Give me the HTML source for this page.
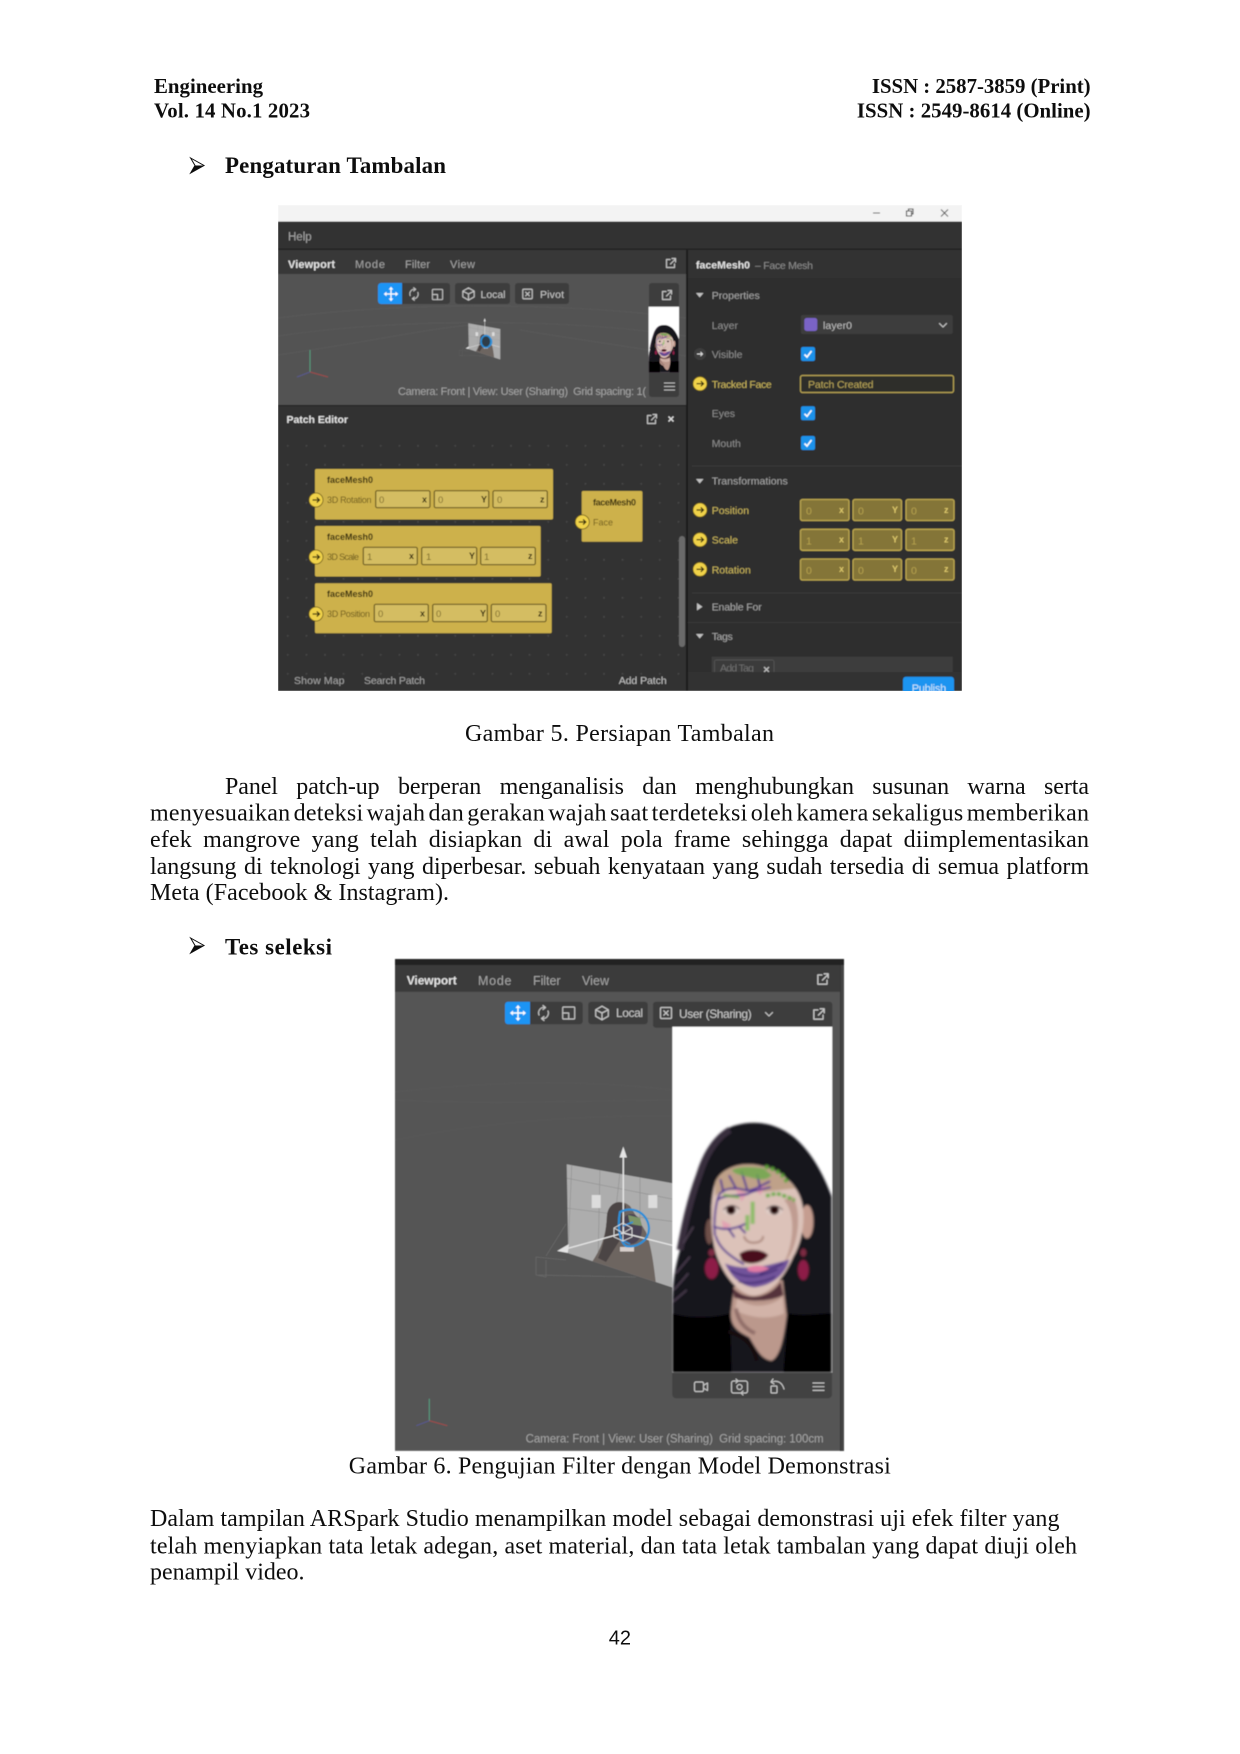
<!DOCTYPE html>
<html lang="id"><head><meta charset="utf-8"><title>Engineering Vol. 14 No.1 2023</title>
<style>
html,body{margin:0;padding:0;background:#fff;width:1240px;height:1754px;overflow:hidden}
svg{display:block}
.t{font-family:"Liberation Serif",serif;fill:#111}
.b{font-weight:700}
.r{font-size:24px}
.h{font-size:20.83px}
.u{font-family:"Liberation Sans",sans-serif;font-size:10.5px;fill:#a4a4a4}
.w{font-weight:700;fill:#e4e4e4}
.y{fill:#c9b55c}
.n{font-family:"Liberation Sans",sans-serif;font-size:9px;fill:#6e5c1e}
.nb{font-weight:700;fill:#33290a}
.i{fill:none;stroke:#c4c4c4;stroke-width:1.2;stroke-linecap:round;stroke-linejoin:round}
</style></head><body>
<svg xmlns="http://www.w3.org/2000/svg" width="1240" height="1754" viewBox="0 0 1240 1754">
<defs>
<filter id="soft" x="-2%" y="-2%" width="104%" height="104%"><feGaussianBlur stdDeviation=".45"/></filter>
<filter id="txt" x="0" y="0" width="100%" height="100%"><feGaussianBlur stdDeviation=".3"/></filter>
<filter id="fb" x="-5%" y="-5%" width="110%" height="110%"><feGaussianBlur stdDeviation="3.200"/></filter>
<pattern id="dots" width="18.6" height="19" patternUnits="userSpaceOnUse"><rect x="8" y="8" width="1.6" height="1.6" fill="#484848"/></pattern>
<clipPath id="c1"><rect x="278" y="205" width="684" height="486"/></clipPath>
<clipPath id="cf"><rect x="672.3" y="1026.7" width="160" height="346"/></clipPath>
<clipPath id="cp"><polygon points="566.7,1164.3 677,1184 677,1289 568.3,1253.3"/></clipPath>
<g id="pop"><path class="i" d="M-1-3.500H-4.500V4.500H3.500V1M-.5 1L4.500-4M1-4.500H4.500V-1"/></g>
<g id="xb"><rect class="i" x="-5" y="-5" width="10" height="10" rx="1"/><path class="i" d="M-2-2L2 2M2-2L-2 2"/></g>
<g id="cube"><path class="i" d="M0-6.500L6-3V3L0 6.500L-6 3V-3ZM-6-3L0 0L6-3M0 0V6.500"/></g>
<g id="mv"><path d="M0-7V7M-7 0H7" stroke="#fff" stroke-width="1.400" fill="none"/><path d="M0-8L-2.500-5H2.500ZM0 8L-2.500 5H2.500ZM-8 0L-5-2.500V2.500ZM8 0L5-2.500V2.500Z" fill="#fff"/></g>
<g id="rot"><path class="i" d="M-4.500 2C-6-2-3-6 1-5.500M4.500-2C6 2 3 6-1 5.500M-.5-7.500L2-5.500L-.5-3.500M.5 7.500L-2 5.500L.5 3.500"/></g>
<g id="sc"><rect class="i" x="-6" y="-6" width="12" height="12" rx="1"/><path class="i" d="M-6 0H0V6"/></g>
<g id="arr"><circle r="7" fill="#f0d24a" stroke="#6b5a1a" stroke-width=".8"/><path d="M-3.500 0H3M.8-2.500L3.500 0L.8 2.500" fill="none" stroke="#332a08" stroke-width="1.200"/></g>
<g id="chk"><rect x="-7" y="-7" width="14" height="14" rx="2" fill="#1b92ea"/><path d="M-3.500.5L-1 3L3.500-3" fill="none" stroke="#fff" stroke-width="1.600"/></g>
<g id="gz">
<polygon points="566.7,1164.3 677,1184 677,1289 568.3,1253.3" fill="#adadad"/>
<g clip-path="url(#cp)">
<path d="M566 1178L677 1200M566 1208L677 1222M572 1160L568 1254M600 1168L598 1262M640 1176L640 1275M620 1172L610 1262" stroke="#929292" stroke-width=".7" fill="none"/>
<path d="M592 1262C600 1250 606 1238 607 1215C609 1201 622 1199 630 1206L646 1232C652 1248 654 1268 656 1284L620 1276Z" fill="#6d6561"/>
<path d="M607 1215C609 1201 622 1199 626 1206L620 1240L606 1262L598 1258C604 1245 606 1232 607 1215Z" fill="#4c4544"/>
<ellipse cx="631" cy="1229" rx="11" ry="15" fill="#4a4352"/>
<path d="M628 1215L640 1218L642 1226L630 1224Z" fill="#7c9468"/>
<rect x="620" y="1247" width="14" height="4.500" fill="#d8cfcb"/>
</g>
<path d="M546 1256L566 1224M536 1257L566 1260M536 1257L536 1275L636 1277M536 1275L546 1277L546 1260" stroke="#696969" stroke-width=".8" fill="none"/>
<rect x="591.700" y="1195" width="9" height="13" fill="#dcdcdc"/><rect x="648.300" y="1195" width="9" height="13" fill="#dcdcdc"/>
<path d="M623.300 1152V1233M623.300 1233L562 1250M623.300 1233L675 1246" stroke="#e6e6e6" stroke-width="1.400" fill="none"/>
<path d="M623.300 1146.500L619.500 1157.500H627Z" fill="#e4e4e4"/>
<path d="M557 1251L569 1244L568 1253Z" fill="#e4e4e4"/>
<path d="M620 1212C634 1205 648 1214 649 1228C649 1242 635 1248 626 1246C618 1240 618 1222 620 1212Z" fill="none" stroke="#2a8fd8" stroke-width="2.200"/>
<path d="M623 1226L633 1222M622 1240L630 1244" stroke="#2a8fd8" stroke-width="1.500"/>
<path d="M614 1228L623 1223L632 1228V1237L623 1241L614 1237ZM614 1228L623 1233L632 1228M623 1233V1241" fill="none" stroke="#ddd" stroke-width=".9"/>
</g>
<g id="ax"><path d="M0 0V-22" stroke="#55a283" stroke-width="1"/><path d="M0 0L18 5" stroke="#a84a4a" stroke-width="1"/><path d="M0 0L-13 5" stroke="#5a5a94" stroke-width="1"/></g>
<g id="face">
<rect x="672.3" y="1026.7" width="160" height="346" fill="#fff"/>
<g clip-path="url(#cf)"><g transform="translate(660 1100) scale(.33333)"><g filter="url(#fb)">
<path d="M37 620C38 560 40 520 60 450C70 380 85 300 110 220C130 150 170 90 230 75C290 60 350 70 400 110C450 150 490 220 515 290V818H37Z" fill="#19131b"/>
<path d="M60 450C75 370 90 300 118 225C135 170 165 115 210 90" fill="none" stroke="#382d3c" stroke-width="20"/>
<path d="M48 520L90 470M42 570L85 520M40 605L80 570M70 430L100 380" stroke="#54465a" stroke-width="4"/>
<path d="M37 640C100 660 180 650 210 640L215 818H37ZM385 640C430 650 480 640 515 640V818H370Z" fill="#040304"/>
<path d="M222 560L214 625C208 670 222 690 268 712C292 752 305 778 335 782C360 770 372 715 380 645L368 540Z" fill="#bb988c"/>
<path d="M232 595C270 625 330 625 368 590L372 640C330 660 270 655 225 630Z" fill="#d2b3a8"/>
<path d="M205 695C240 705 278 725 290 782" fill="none" stroke="#120c11" stroke-width="11"/>
<path d="M228 625C235 670 262 690 285 700" fill="none" stroke="#7f5c5a" stroke-width="12" opacity=".7"/>
<ellipse cx="441" cy="365" rx="19" ry="50" fill="#c59d90"/>
<ellipse cx="148" cy="395" rx="12" ry="38" fill="#6e5048"/>
<path d="M165 250C175 215 225 185 290 195C350 205 400 240 420 290C440 340 430 420 400 470C375 530 330 585 280 587C230 582 180 510 165 450C150 390 150 300 165 250Z" fill="#dcc2b9"/>
<path d="M165 250C175 215 225 185 290 195C340 205 385 235 405 265C350 270 300 280 250 275C215 270 185 265 165 290Z" fill="#bfa189"/>
<path d="M218 562C250 602 325 602 362 545L370 585C335 606 262 606 222 592Z" fill="#55303a"/>
<path d="M372 300C410 340 400 440 370 490C410 460 430 350 400 290Z" fill="#b48c80" opacity=".7"/>
<path d="M225 265L262 280L245 305ZM280 262L320 258L300 285ZM185 360L215 375L190 390Z" fill="#e39ab0" opacity=".8"/>
<path d="M165 405C160 360 168 300 180 280C200 262 230 262 262 272C285 270 305 255 328 245M172 300C195 282 230 290 262 282C282 270 300 270 330 262M162 380C195 392 225 388 255 372M228 265L208 228M262 270L245 216M300 262L292 225M190 275L182 240M205 386L222 410M238 380L255 398M168 410C178 445 210 468 250 492" fill="none" stroke="#4e3191" stroke-width="6" stroke-linecap="round"/>
<path d="M195 490C250 512 310 502 388 478C378 520 340 556 285 562C245 560 212 530 195 490Z" fill="#71529a"/>
<path d="M262 503C285 492 312 497 328 506C310 516 282 520 264 512Z" fill="#e27aa4"/>
<path d="M212 512C245 530 285 540 352 508M236 545C260 552 300 552 345 530M300 522L370 490" fill="none" stroke="#37236c" stroke-width="4"/>
<path d="M215 210C240 198 280 200 310 205L335 225C320 245 290 238 270 232C245 225 228 226 215 210Z" fill="#6fa84f" opacity=".85"/>
<path d="M315 200L345 210L365 225L385 250" fill="none" stroke="#5ea439" stroke-width="12" stroke-dasharray="11 7"/>
<path d="M318 288L350 280L385 292L405 302" fill="none" stroke="#6cad47" stroke-width="11" stroke-dasharray="12 5"/>
<path d="M278 305V372M262 345V392" fill="none" stroke="#7dbb57" stroke-width="12" opacity=".85"/>
<path d="M190 285L238 292" stroke="#6cad47" stroke-width="9" opacity=".7"/>
<ellipse cx="213" cy="330" rx="26" ry="16" fill="#e0cec8"/><circle cx="213" cy="330" r="14" fill="#3a1b1c"/><circle cx="213" cy="330" r="6" fill="#0b0506"/>
<ellipse cx="343" cy="330" rx="26" ry="16" fill="#e0cec8"/><circle cx="343" cy="330" r="14" fill="#3a1b1c"/><circle cx="343" cy="330" r="6" fill="#0b0506"/>
<path d="M190 330C202 314 226 312 238 328M320 328C332 314 354 314 368 330" fill="none" stroke="#3c2427" stroke-width="3"/>
<path d="M252 408C255 422 268 430 285 428C298 428 310 420 309 408" fill="none" stroke="#a98478" stroke-width="6"/>
<path d="M238 462C255 446 300 443 325 465C310 492 265 497 245 482Z" fill="#4a0d1c"/>
<ellipse cx="155" cy="505" rx="20" ry="32" fill="#8d1d46"/><ellipse cx="155" cy="458" rx="10" ry="11" fill="#7d2a42"/>
<ellipse cx="430" cy="510" rx="16" ry="30" fill="#8d1d46"/><ellipse cx="430" cy="458" rx="9" ry="12" fill="#7d2a42"/>
</g></g></g></g>
</defs>

<!-- PAGE TEXT -->
<g filter="url(#txt)">
<text class="t b h" x="154" y="93" textLength="109">Engineering</text>
<text class="t b h" x="154" y="117.500" textLength="156">Vol. 14 No.1 2023</text>
<text class="t b h" x="871.900" y="93" textLength="218.700">ISSN : 2587-3859 (Print)</text>
<text class="t b h" x="856.900" y="117.500" textLength="233.700">ISSN : 2549-8614 (Online)</text>
<text class="t b" font-size="22.900" x="225" y="173" textLength="221">Pengaturan Tambalan</text>
<text class="t r" x="465" y="741" textLength="309">Gambar 5. Persiapan Tambalan</text>
<text class="t r" x="225" y="794" style="word-spacing:12.500px" textLength="864">Panel patch-up berperan menganalisis dan menghubungkan susunan warna serta</text>
<text class="t r" x="150" y="820.700" style="word-spacing:-3px" textLength="939">menyesuaikan deteksi wajah dan gerakan wajah saat terdeteksi oleh kamera sekaligus memberikan</text>
<text class="t r" x="150" y="847" style="word-spacing:5px" textLength="939">efek mangrove yang telah disiapkan di awal pola frame sehingga dapat diimplementasikan</text>
<text class="t r" x="150" y="874.200" style="word-spacing:1.500px" textLength="939">langsung di teknologi yang diperbesar. sebuah kenyataan yang sudah tersedia di semua platform</text>
<text class="t r" x="150" y="900" textLength="299">Meta (Facebook &amp; Instagram).</text>
<text class="t b" font-size="22.900" x="225" y="954.300" textLength="107">Tes seleksi</text>
<text class="t r" x="348.800" y="1473.500" textLength="542">Gambar 6. Pengujian Filter dengan Model Demonstrasi</text>
<text class="t r" x="150" y="1526" textLength="909.500">Dalam tampilan ARSpark Studio menampilkan model sebagai demonstrasi uji efek filter yang</text>
<text class="t r" x="150" y="1553.300" textLength="927">telah menyiapkan tata letak adegan, aset material, dan tata letak tambalan yang dapat diuji oleh</text>
<text class="t r" x="150" y="1579.500" textLength="154.500">penampil video.</text>
<text font-family="Liberation Sans, sans-serif" font-size="20px" fill="#111" x="608.700" y="1644.300" textLength="22.300">42</text>
<path d="M190.600 158L204 165.500L190.600 173L195 165.500Z" fill="#fff" stroke="#111" stroke-width="1"/><path d="M195 165.500H204L190.600 173Z" fill="#111"/>
<path d="M190.600 938L204 945.500L190.600 953L195 945.500Z" fill="#fff" stroke="#111" stroke-width="1"/><path d="M195 945.500H204L190.600 953Z" fill="#111"/>
</g>

<!-- FIGURE 5 -->
<g clip-path="url(#c1)"><g filter="url(#soft)">
<rect x="278" y="205" width="684" height="486" fill="#2f2f2f"/>
<rect x="278" y="205" width="684" height="16.500" fill="#f3f3f3"/>
<path d="M873 213H880M941 209.500L948 216.500M948 209.500L941 216.500" stroke="#555" stroke-width="1" fill="none"/>
<path d="M906.500 211H911.500V216H906.500ZM908.500 211V209H913V214H911.500" stroke="#444" stroke-width="1.100" fill="none"/>
<rect x="278" y="221.500" width="684" height="27" fill="#333"/>
<rect x="278" y="248.500" width="684" height="1.500" fill="#232323"/>
<text class="u" x="288" y="240.500" style="font-size:11.500px">Help</text>
<rect x="278" y="250" width="408" height="24" fill="#373737"/>
<text class="u w" x="288" y="268" textLength="47" style="font-size:11px">Viewport</text>
<text class="u" x="355" y="268" textLength="30" style="font-size:11px">Mode</text>
<text class="u" x="405" y="268" textLength="25" style="font-size:11px">Filter</text>
<text class="u" x="450" y="268" textLength="25" style="font-size:11px">View</text>
<use href="#pop" x="671" y="263"/>
<rect x="278" y="274" width="408" height="131" fill="#535353"/>
<path d="M278 318C400 302 560 302 686 318M278 336C400 318 560 318 686 336M278 355C380 340 420 330 470 325M520 330C580 340 620 345 686 356" stroke="#5b5b5b" stroke-width=".7" fill="none"/>
<rect x="378" y="283" width="72" height="21" rx="3" fill="#3c3c3c"/>
<path d="M381 283H402V304H381A3 3 0 0 1 378 301V286A3 3 0 0 1 381 283Z" fill="#1a94f4"/>
<use href="#mv" transform="translate(391 294) scale(.9)"/>
<use href="#rot" transform="translate(414 294) scale(.85)"/>
<use href="#sc" transform="translate(437.500 294.500) scale(.85)"/>
<rect x="455" y="283" width="55" height="21" rx="3" fill="#3c3c3c"/>
<use href="#cube" transform="translate(468.500 294) scale(.95)"/>
<text class="u" x="480.500" y="298" textLength="25" style="fill:#c8c8c8">Local</text>
<rect x="515" y="283" width="54" height="21" rx="3" fill="#3c3c3c"/>
<use href="#xb" transform="translate(527.500 294) scale(.95)"/>
<text class="u" x="540" y="298" textLength="24" style="fill:#c8c8c8">Pivot</text>
<rect x="649" y="283" width="30" height="114" rx="3" fill="#3c3c3c"/>
<use href="#pop" x="667" y="295"/>
<use href="#face" transform="translate(648.600 306.700) scale(.19) translate(-672.300 -1026.700)"/>
<path d="M664 383H675M664 386.500H675M664 390H675" stroke="#bbb" stroke-width="1"/>
<use href="#gz" transform="translate(468.300 323.300) scale(.29) translate(-566.700 -1164.300)"/>
<ellipse cx="486" cy="341.500" rx="5" ry="6" fill="#2d3c4a" stroke="#2a8fd8" stroke-width="1.600"/>
<use href="#ax" x="310" y="372" opacity=".9"/>
<text class="u" x="398" y="395" textLength="248" style="font-size:11px">Camera: Front | View: User (Sharing)&#160;&#160;Grid spacing: 1(</text>
<rect x="278" y="405" width="409" height="1.500" fill="#1f1f1f"/>
<rect x="278" y="406" width="408" height="285" fill="#313131"/>
<rect x="278" y="440" width="408" height="251" fill="url(#dots)"/>
<text class="u w" x="286.500" y="423" textLength="61.500">Patch Editor</text>
<use href="#pop" x="652" y="419"/>
<path d="M668.500 416.500L673.500 421.500M673.500 416.500L668.500 421.500" stroke="#ddd" stroke-width="1.400"/>
<!-- nodes -->
<g>
<rect x="315" y="469" width="238" height="50.500" rx="1.500" fill="#cdb14b"/>
<rect x="315" y="526" width="225.700" height="50.500" rx="1.500" fill="#cdb14b"/>
<rect x="315" y="583.300" width="236.700" height="50" rx="1.500" fill="#cdb14b"/>
<rect x="581.700" y="491" width="60.700" height="50.700" rx="1.500" fill="#cdb14b"/>
<text class="n nb" x="327" y="483">faceMesh0</text><text class="n nb" x="327" y="540">faceMesh0</text><text class="n nb" x="327" y="597">faceMesh0</text><text class="n nb" x="593" y="505.500" textLength="43">faceMesh0</text>
<text class="n" x="327" y="503" textLength="44.500">3D Rotation</text><text class="n" x="327" y="560" textLength="32">3D Scale</text><text class="n" x="327" y="617" textLength="43">3D Position</text><text class="n" x="593" y="525.500">Face</text>
<g fill="#d4bd62" stroke="#6b5a20" stroke-width="1.200">
<rect x="375.700" y="490.700" width="54.300" height="17" rx="1.500"/><rect x="434.300" y="490.700" width="54.500" height="17" rx="1.500"/><rect x="493" y="490.700" width="54.300" height="17" rx="1.500"/>
<rect x="363.300" y="547.300" width="54" height="17.400" rx="1.500"/><rect x="421.700" y="547.300" width="55" height="17.400" rx="1.500"/><rect x="480.700" y="547.300" width="54.600" height="17.400" rx="1.500"/>
<rect x="374.300" y="604.300" width="54" height="17.400" rx="1.500"/><rect x="432.700" y="604.300" width="54.600" height="17.400" rx="1.500"/><rect x="491.300" y="604.300" width="54.700" height="17.400" rx="1.500"/>
</g>
<g font-family="Liberation Sans, sans-serif" font-size="9.500" fill="#7b6a2c">
<text x="379" y="503">0</text><text x="438" y="503">0</text><text x="497" y="503">0</text>
<text x="367" y="560">1</text><text x="426" y="560">1</text><text x="484" y="560">1</text>
<text x="378" y="617">0</text><text x="436" y="617">0</text><text x="495" y="617">0</text>
</g>
<g font-family="Liberation Sans, sans-serif" font-size="9" font-weight="700" fill="#33290a">
<text x="422" y="502.500">x</text><text x="481" y="502.500">Y</text><text x="540" y="502.500">z</text>
<text x="409" y="559">x</text><text x="469" y="559">Y</text><text x="528" y="559">z</text>
<text x="420" y="616.500">x</text><text x="480" y="616.500">Y</text><text x="538" y="616.500">z</text>
</g>
<use href="#arr" x="316" y="500"/><use href="#arr" x="316" y="557"/><use href="#arr" x="316" y="614"/><use href="#arr" x="582.300" y="522"/>
</g>
<rect x="679" y="536" width="6" height="111" rx="3" fill="#6a6a6a"/>
<text class="u" x="294" y="684" textLength="50.500">Show Map</text>
<text class="u" x="364" y="684" textLength="61">Search Patch</text>
<text class="u" x="618.700" y="684" textLength="48" style="fill:#c0c0c0">Add Patch</text>
<!-- right panel -->
<rect x="686" y="250" width="2" height="441" fill="#1d1d1d"/>
<rect x="688" y="250" width="274" height="441" fill="#2f2f2f"/>
<rect x="688" y="250" width="274" height="28" fill="#323232"/>
<text class="u w" x="696" y="268.500" textLength="54">faceMesh0</text>
<text class="u" x="755" y="269" textLength="58" style="fill:#8c8c8c">– Face Mesh</text>
<path d="M696 293L703.500 293L699.700 297.500Z" fill="#c0c0c0"/>
<text class="u" x="711.700" y="299" textLength="48">Properties</text>
<text class="u" x="711.700" y="329" style="fill:#8c8c8c">Layer</text>
<rect x="801" y="315" width="151.700" height="19" rx="2" fill="#3e3e3e"/>
<rect x="804.300" y="318" width="13" height="13" rx="2.500" fill="#7a63c6"/>
<text class="u" x="823" y="329" textLength="29" style="fill:#bcbcbc">layer0</text>
<path d="M939.500 323.500L943 327L946.500 323.500" class="i"/>
<circle cx="700" cy="354" r="6" fill="#3c3c3c"/><path d="M697 354H702.500M700.500 352L702.500 354L700.500 356" stroke="#ddd" stroke-width="1" fill="none"/>
<text class="u" x="711.700" y="358" style="fill:#8c8c8c">Visible</text>
<use href="#chk" x="808" y="354"/>
<use href="#arr" x="700" y="383.700"/>
<text class="u y" x="711.700" y="388" textLength="60">Tracked Face</text>
<rect x="800.500" y="375.500" width="153" height="17" rx="2" fill="#2e2d2a" stroke="#b9a552" stroke-width="1.200"/>
<text class="u" x="808" y="388" textLength="65.500" style="fill:#b7a458">Patch Created</text>
<text class="u" x="711.700" y="417" style="fill:#8c8c8c">Eyes</text><use href="#chk" x="808" y="413.300"/>
<text class="u" x="711.700" y="447" style="fill:#8c8c8c">Mouth</text><use href="#chk" x="808" y="443"/>
<rect x="692" y="465.500" width="270" height="1" fill="#3b3b3b"/>
<path d="M696 479L703.500 479L699.700 483.500Z" fill="#c0c0c0"/>
<text class="u" x="711.700" y="484.500" textLength="76">Transformations</text>
<use href="#arr" x="700" y="510"/><use href="#arr" x="700" y="539.700"/><use href="#arr" x="700" y="569.300"/>
<text class="u y" x="711.700" y="514">Position</text><text class="u y" x="711.700" y="543.700">Scale</text><text class="u y" x="711.700" y="573.300">Rotation</text>
<g fill="#847439" stroke="#bea84f" stroke-width="1.300">
<rect x="800.500" y="499.500" width="48.500" height="21" rx="2"/><rect x="853" y="499.500" width="48.500" height="21" rx="2"/><rect x="906" y="499.500" width="48" height="21" rx="2"/>
<rect x="800.500" y="529.300" width="48.500" height="21" rx="2"/><rect x="853" y="529.300" width="48.500" height="21" rx="2"/><rect x="906" y="529.300" width="48" height="21" rx="2"/>
<rect x="800.500" y="559" width="48.500" height="21" rx="2"/><rect x="853" y="559" width="48.500" height="21" rx="2"/><rect x="906" y="559" width="48" height="21" rx="2"/>
</g>
<g font-family="Liberation Sans, sans-serif" font-size="10.500" fill="#b5a24e">
<text x="806" y="514.500">0</text><text x="858" y="514.500">0</text><text x="911" y="514.500">0</text>
<text x="806" y="544.500">1</text><text x="858" y="544.500">1</text><text x="911" y="544.500">1</text>
<text x="806" y="574">0</text><text x="858" y="574">0</text><text x="911" y="574">0</text>
</g>
<g font-family="Liberation Sans, sans-serif" font-size="9" font-weight="700" fill="#dcc76b">
<text x="839" y="513">x</text><text x="892" y="513">Y</text><text x="944" y="513">z</text>
<text x="839" y="542.500">x</text><text x="892" y="542.500">Y</text><text x="944" y="542.500">z</text>
<text x="839" y="572">x</text><text x="892" y="572">Y</text><text x="944" y="572">z</text>
</g>
<rect x="692" y="592.500" width="270" height="1" fill="#393939"/>
<path d="M697 603L702.500 606.700L697 610.500Z" fill="#c0c0c0"/>
<text class="u" x="711.700" y="610.500" textLength="50">Enable For</text>
<rect x="688" y="622" width="274" height="1" fill="#3b3b3b"/>
<path d="M696 634L703.500 634L699.700 638.500Z" fill="#c0c0c0"/>
<text class="u" x="711.700" y="640" textLength="21">Tags</text>
<rect x="711.700" y="656.700" width="241" height="15.300" fill="#3d3d3d"/>
<rect x="714.500" y="660" width="59.500" height="14" rx="2" fill="#3a3a3a" stroke="#525252"/>
<text class="u" x="720" y="671.500" textLength="34" style="fill:#6e6e6e">Add Tag</text>
<path d="M764 667L769 672M769 667L764 672" stroke="#bbb" stroke-width="1.300"/>
<rect x="688" y="672" width="274" height="19" fill="#333"/>
<rect x="903" y="676.700" width="51" height="20" rx="3" fill="#1a94f0"/>
<text class="u" x="911.700" y="692" textLength="34.500" style="fill:#cfe8fb;font-size:11px">Publish</text>
</g></g>

<!-- FIGURE 6 -->
<g filter="url(#soft)">
<rect x="395" y="959" width="449" height="491.700" fill="#222"/>
<rect x="395" y="965" width="446" height="26.700" fill="#3a3a3a"/>
<rect x="395" y="991.700" width="445" height="459" fill="#555"/>
<rect x="840" y="965" width="1.200" height="486" fill="#333"/>
<rect x="841" y="965" width="3" height="486" fill="#444"/>
<text class="u w" x="406.700" y="984.500" textLength="50" style="font-size:12px">Viewport</text>
<text class="u" x="478" y="985" textLength="33.500" style="font-size:12.500px">Mode</text>
<text class="u" x="533" y="985" textLength="27.500" style="font-size:12.500px">Filter</text>
<text class="u" x="582" y="985" textLength="27" style="font-size:12.500px">View</text>
<use href="#pop" transform="translate(823 979) scale(1.150)"/>
<path d="M395 1092C500 1080 590 1080 672 1090M395 1100C500 1105 600 1100 672 1100M395 1140C470 1125 560 1115 672 1116" stroke="#5b5b5b" stroke-width=".7" fill="none"/>
<rect x="505" y="1001.700" width="77.700" height="22.600" rx="3" fill="#3e3e3e"/>
<path d="M508 1001.700H530V1024.300H508A3 3 0 0 1 505 1021.300V1004.700A3 3 0 0 1 508 1001.700Z" fill="#1a94f4"/>
<use href="#mv" transform="translate(518 1013)"/>
<use href="#rot" transform="translate(543.500 1013)"/>
<use href="#sc" transform="translate(568.700 1013)"/>
<rect x="588.300" y="1001.700" width="59.400" height="22.600" rx="3" fill="#3e3e3e"/>
<use href="#cube" transform="translate(602 1013) scale(1.050)"/>
<text class="u" x="616" y="1017" textLength="27" style="font-size:12px;fill:#c8c8c8">Local</text>
<rect x="653" y="1001.700" width="179.300" height="26" rx="3" fill="#3e3e3e"/>
<use href="#xb" transform="translate(666 1013) scale(1.100)"/>
<text class="u" x="679" y="1018" textLength="72.700" style="font-size:12px;fill:#c8c8c8">User (Sharing)</text>
<path class="i" d="M765.500 1012.500L769 1016L772.500 1012.500" stroke-width="1.500"/>
<use href="#pop" transform="translate(819 1014) scale(1.150)"/>
<use href="#gz"/>
<use href="#face"/>
<path d="M672.300 1372.700H832V1394A4 4 0 0 1 828 1398.300H676.500A4 4 0 0 1 672.300 1394Z" fill="#424242"/>
<g>
<rect class="i" x="694.500" y="1382" width="9" height="9.500" rx="1.500"/><path class="i" d="M704 1385L707.500 1383V1390.500L704 1388.500"/>
<rect class="i" x="731.500" y="1381" width="16" height="12" rx="2"/><circle class="i" cx="739.500" cy="1387" r="2.500"/><path class="i" d="M736 1379L738 1381L736 1383M743 1391L741 1393L743 1395"/>
<rect class="i" x="771" y="1386" width="6" height="7" rx="1"/><path class="i" d="M772 1382C777 1380 782 1382 784 1389M773 1379L771 1382L774 1384"/>
<path class="i" d="M813 1383H824M813 1386.700H824M813 1390.400H824"/>
</g>
<use href="#ax" x="429.300" y="1420.700"/>
<text class="u" x="525.600" y="1442.700" textLength="298" style="font-size:11.500px">Camera: Front | View: User (Sharing)&#160;&#160;Grid spacing: 100cm</text>
</g>
</svg>
</body></html>
